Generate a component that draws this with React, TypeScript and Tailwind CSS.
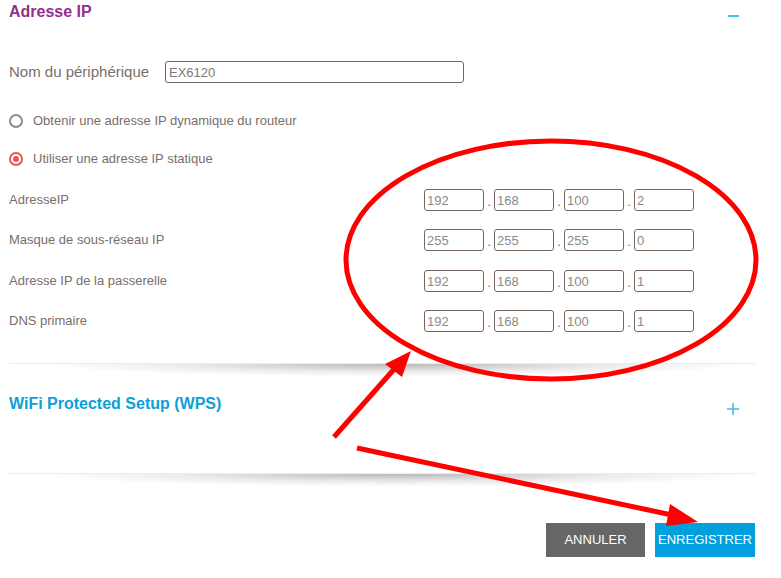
import React from 'react'

const ipRows = [
    { label: 'AdresseIP', values: ['192', '168', '100', '2'], gap: 'mt-[19px]' },
    { label: 'Masque de sous-réseau IP', values: ['255', '255', '255', '0'], gap: 'mt-[18px]' },
    { label: 'Adresse IP de la passerelle', values: ['192', '168', '100', '1'], gap: 'mt-[19px]' },
    { label: 'DNS primaire', values: ['192', '168', '100', '1'], gap: 'mt-[18px]' },
]

function Radio({ checked }: { checked?: boolean }) {
    return checked ? (
        <span className="flex h-[14px] w-[14px] items-center justify-center rounded-full border-2 border-[#ea5550]">
            <span className="h-[6px] w-[6px] rounded-full bg-[#ea5550]" />
        </span>
    ) : (
        <span className="h-[14px] w-[14px] rounded-full border-2 border-[#8c8a98]" />
    )
}

function Divider() {
    return (
        <div>
            <div className="h-px bg-[#ececec]" />
            <div className="ml-[50px] mr-[20px] h-[12px] bg-[radial-gradient(ellipse_at_top,rgba(0,0,0,0.28),rgba(0,0,0,0.08)_45%,transparent_75%)]" />
        </div>
    )
}

export default function App() {
    return (
        <div className="relative h-[578px] w-[781px] overflow-hidden bg-white font-['Liberation_Sans',Arial,sans-serif]">
            <div className="ml-[9px] w-[746px]">
                {/* Adresse IP */}
                <div className="flex h-[24px] items-start justify-between pr-4">
                    <h2 className="text-[16px] font-bold leading-[24px] text-[#962d91]">
                        Adresse IP
                    </h2>
                    <div className="mt-[15px] h-[2px] w-[11px] bg-[#45c3ee]" />
                </div>

                <div className="mt-[37px] flex h-[22px] items-center">
                    <label className="w-[156px] text-[15px] text-[#7a6d6a]">
                        Nom du périphérique
                    </label>
                    <input
                        defaultValue="EX6120"
                        className="h-[22px] w-[299px] rounded-[3px] border border-[#75665f] px-[3px] text-[13px] text-[#7a7a7a] outline-none"
                    />
                </div>

                <div className="mt-[27px] flex h-[22px] items-center gap-[10px] text-[13px] text-[#7a6d6a]">
                    <Radio />
                    <span>Obtenir une adresse IP dynamique du routeur</span>
                </div>
                <div className="mt-[16px] flex h-[22px] items-center gap-[10px] text-[13px] text-[#7a6d6a]">
                    <Radio checked />
                    <span>Utiliser une adresse IP statique</span>
                </div>

                {ipRows.map((row) => (
                    <div key={row.label} className={`${row.gap} flex h-[22px] items-center`}>
                        <span className="w-[415px] text-[13px] text-[#7a6d6a]">{row.label}</span>
                        {row.values.map((v, i) => (
                            <React.Fragment key={i}>
                                {i > 0 && (
                                    <span className="w-[10px] pt-[4px] text-center text-[13px] text-[#7a6d6a]">.</span>
                                )}
                                <input
                                    defaultValue={v}
                                    className="h-[22px] w-[60px] rounded-[3px] border border-[#75665f] px-[2px] text-[13px] text-[#8a8a8a] outline-none"
                                />
                            </React.Fragment>
                        ))}
                    </div>
                ))}

                <div className="mt-[31px]">
                    <Divider />
                </div>

                {/* WPS */}
                <div className="mt-[16px] flex h-[24px] items-start justify-between pr-4">
                    <h2 className="text-[16px] font-bold leading-[24px] text-[#0ba0d9]">
                        WiFi Protected Setup (WPS)
                    </h2>
                    <svg width="12" height="12" viewBox="0 0 12 12" className="mt-[11px]">
                        <path d="M6 0v12M0 6h12" stroke="#45b8e8" strokeWidth="1.5" />
                    </svg>
                </div>

                <div className="mt-[57px]">
                    <Divider />
                </div>

                <div className="mt-[37px] flex justify-end gap-[10px]">
                    <button className="h-[34px] w-[99px] bg-[#666666] text-[13px] text-white">
                        ANNULER
                    </button>
                    <button className="h-[34px] w-[100px] bg-[#00a0df] text-[13px] text-white">
                        ENREGISTRER
                    </button>
                </div>
            </div>

            {/* red annotation overlay */}
            <svg
                className="pointer-events-none absolute left-0 top-0"
                width="781"
                height="578"
                viewBox="0 0 781 578"
            >
                <ellipse cx="551" cy="260" rx="205" ry="119" fill="none" stroke="#ff0000" strokeWidth="5" />
                <line x1="334" y1="437" x2="396" y2="367" stroke="#ff0000" strokeWidth="5" />
                <polygon points="411,351 385,364 402,377" fill="#ff0000" />
                <line x1="357" y1="448" x2="672" y2="515" stroke="#ff0000" strokeWidth="5" />
                <polygon points="698,522 670,504 666,526" fill="#ff0000" />
            </svg>
        </div>
    )
}
